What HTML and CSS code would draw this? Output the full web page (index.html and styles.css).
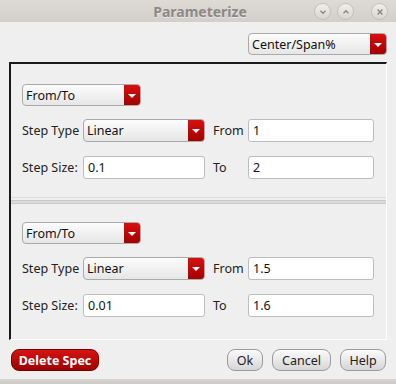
FILE: index.html
```html
<!DOCTYPE html>
<html>
    <head>
        <meta charset="UTF-8">
        <title>Parameterize</title>
        <link rel="stylesheet" href="styles.css">
    </head>
    <body>
        <div class="window">
            <div class="titlebar">
                <span class="title">Parameterize</span>
                <div class="winbtns">
                    <span class="winbtn">
                        <svg width="10" height="10" viewBox="0 0 10 10"><path d="M2.5 3.8 L5 6.3 L7.5 3.8" fill="none" stroke="#8a8784" stroke-width="1.4"/></svg>
                    </span>
                    <span class="winbtn">
                        <svg width="10" height="10" viewBox="0 0 10 10"><path d="M2.5 6.2 L5 3.7 L7.5 6.2" fill="none" stroke="#8a8784" stroke-width="1.4"/></svg>
                    </span>
                    <span class="winbtn close">
                        <svg width="10" height="10" viewBox="0 0 10 10"><path d="M2.6 2.6 L7.4 7.4 M7.4 2.6 L2.6 7.4" fill="none" stroke="#8a8784" stroke-width="1.4"/></svg>
                    </span>
                </div>
            </div>
            <div class="content">
                <div class="toprow">
                    <div class="combo wide">
                        <span class="combo-text">Center/Span%</span>
                        <span class="combo-arrow"></span>
                    </div>
                </div>
                <div class="panel">
                    <div class="spec">
                        <div class="combo mode">
                            <span class="combo-text">From/To</span>
                            <span class="combo-arrow"></span>
                        </div>
                        <div class="grid">
                            <span class="label">Step Type</span>
                            <div class="combo">
                                <span class="combo-text">Linear</span>
                                <span class="combo-arrow"></span>
                            </div>
                            <span class="label side">From</span>
                            <div class="field">1</div>
                            <span class="label">Step Size:</span>
                            <div class="field">0.1</div>
                            <span class="label side">To</span>
                            <div class="field">2</div>
                        </div>
                    </div>
                    <div class="separator"></div>
                    <div class="spec second">
                        <div class="combo mode">
                            <span class="combo-text">From/To</span>
                            <span class="combo-arrow"></span>
                        </div>
                        <div class="grid">
                            <span class="label">Step Type</span>
                            <div class="combo">
                                <span class="combo-text">Linear</span>
                                <span class="combo-arrow"></span>
                            </div>
                            <span class="label side">From</span>
                            <div class="field">1.5</div>
                            <span class="label">Step Size:</span>
                            <div class="field">0.01</div>
                            <span class="label side">To</span>
                            <div class="field">1.6</div>
                        </div>
                    </div>
                </div>
                <div class="footer">
                    <button class="btn danger">Delete Spec</button>
                    <div class="spacer"></div>
                    <button class="btn ok">Ok</button>
                    <button class="btn cancel">Cancel</button>
                    <button class="btn help">Help</button>
                </div>
            </div>
            <div class="bottomframe"></div>
        </div>
    </body>
</html>
```

FILE: styles.css
```css
body{
    margin: 0;
    padding: 0;
    font-family: "Noto Sans", sans-serif;
    font-size: 12px;
    color: #222;
    background-color: #efefef;
}
.window{
    width: 396px;
    height: 384px;
    display: flex;
    flex-direction: column;
    overflow: hidden;
}
.titlebar{
    height: 22px;
    flex: none;
    background: linear-gradient(#dedad6, #d3cfcb);
    position: relative;
    display: flex;
    align-items: center;
    justify-content: center;
}
.title{
    font-weight: bold;
    font-size: 14px;
    color: #8c8884;
    text-shadow: 0 1px 0 #ebe8e5;
    margin-left: 4px;
}
.winbtns{
    position: absolute;
    top: 3px;
    left: 314px;
    display: flex;
    gap: 6px;
}
.winbtn{
    width: 17px;
    height: 17px;
    box-sizing: border-box;
    border-radius: 50%;
    border: 1px solid #c2beba;
    background: linear-gradient(#f0eeec, #d9d5d1);
    display: flex;
    align-items: center;
    justify-content: center;
}
.winbtn.close{
    margin-left: 11px;
}
.content{
    flex: 1;
    display: flex;
    flex-direction: column;
}
.toprow{
    display: flex;
    justify-content: flex-end;
    padding: 11px 9px 0 0;
}
.combo{
    height: 22px;
    box-sizing: border-box;
    border: 1px solid #aaa;
    border-radius: 4px;
    background: linear-gradient(#fcfcfc, #e6e6e6);
    display: flex;
    align-items: center;
    overflow: hidden;
}
.combo.wide{
    width: 139px;
}
.combo.mode{
    width: 119px;
}
.combo-text{
    flex: 1;
    padding-left: 3px;
    font-size: 12.5px;
    color: #111;
}
.combo-arrow{
    width: 16px;
    height: 100%;
    background: linear-gradient(#d81010, #a30000);
    display: flex;
    align-items: center;
    justify-content: center;
}
.combo-arrow::after{
    content: "";
    border-left: 4px solid transparent;
    border-right: 4px solid transparent;
    border-top: 4px solid #fff;
    margin-top: 1px;
}
.panel{
    margin: 7px 0 0 9px;
    width: 378px;
    height: 278px;
    box-sizing: border-box;
    border-top: 2px solid #1a1a1a;
    border-left: 2px solid #1a1a1a;
    border-right: 1px solid #fff;
    border-bottom: 1px solid #fff;
}
.spec{
    padding: 20px 0 0 11px;
    height: 134px;
    box-sizing: border-box;
    border-bottom: 1px solid #dcdcdc;
}
.spec.second{
    padding-top: 18px;
    border-bottom: none;
    height: auto;
}
.separator{
    margin-top: 2px;
    height: 2px;
    border-top: 1px solid #c9c9c9;
    border-bottom: 1px solid #c9c9c9;
    background-color: #dadada;
}
.grid{
    margin-top: 13px;
    display: grid;
    grid-template-columns: 61px 122px 43px 126px;
    grid-auto-rows: 23px;
    row-gap: 14px;
    align-items: center;
}
.grid .combo{
    height: 23px;
}
.label{
    font-size: 12.5px;
    color: #222;
}
.label.side{
    padding-left: 8px;
}
.field{
    height: 23px;
    box-sizing: border-box;
    border: 1px solid #bdbdbd;
    border-radius: 3px;
    background-color: #fff;
    padding-left: 4px;
    display: flex;
    align-items: center;
    font-size: 12.5px;
    color: #111;
}
.footer{
    display: flex;
    align-items: center;
    gap: 9px;
    padding: 9px 10px 0 11px;
}
.spacer{
    flex: 1;
}
.btn{
    height: 22px;
    box-sizing: border-box;
    border: 1px solid #9a9a9a;
    border-radius: 8px;
    background: linear-gradient(#fbfbfb, #d6d6d6);
    font-family: "Noto Sans", sans-serif;
    font-size: 12.5px;
    color: #222;
    padding: 0;
}
.btn.danger{
    width: 88px;
    border-color: #7a0000;
    background: linear-gradient(#d41414, #9e0000);
    color: #fff;
    font-weight: bold;
}
.btn.ok{
    width: 36px;
}
.btn.cancel{
    width: 59px;
}
.btn.help{
    width: 46px;
}
.bottomframe{
    height: 5px;
    flex: none;
    background: linear-gradient(#d9d6d3, #cdc9c5);
}
```
